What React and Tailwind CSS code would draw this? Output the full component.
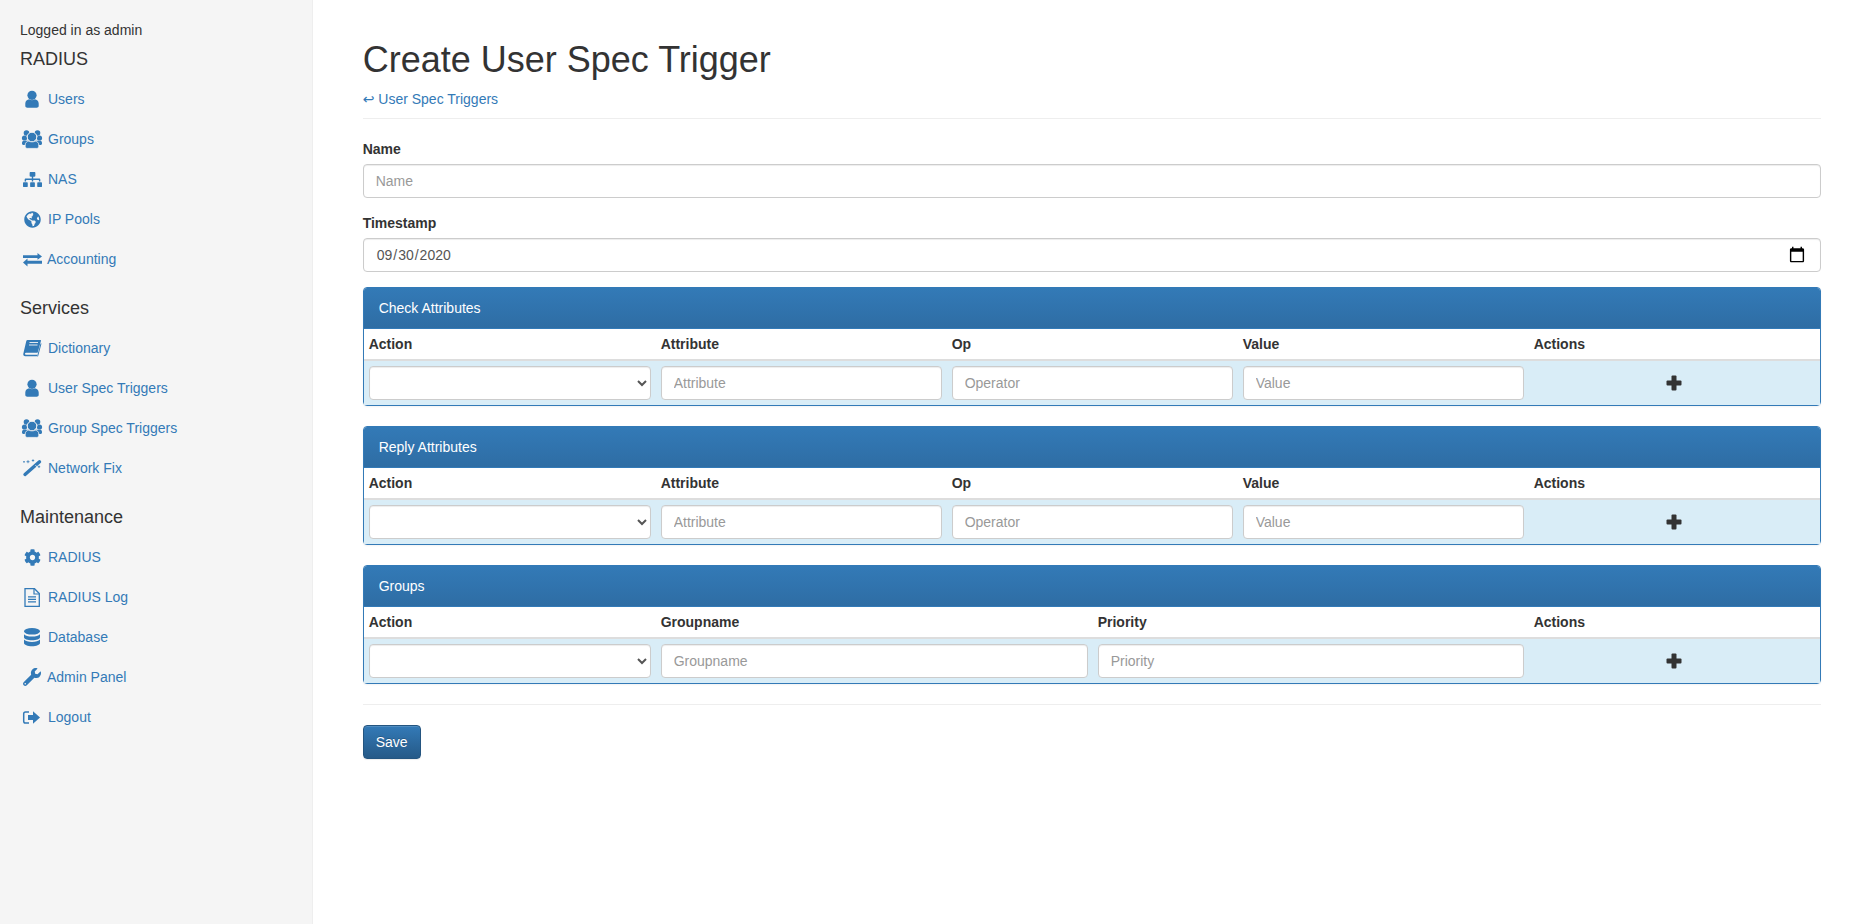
import { FaCog, FaGlobeAmericas, FaSitemap, FaWrench } from "react-icons/fa";

const Box = ({ children }) => (
  <svg className="h-[20px] w-[28px] shrink-0" viewBox="0 0 28 20" fill="#337ab7">{children}</svg>
);

const UserIcon = () => (
  <Box>
    <circle cx="12" cy="6.300" r="4.600" />
    <path d="M5.300 14.500c0-2.600 2-3.600 3.800-4.200 1.600 1.100 4.200 1.100 5.800 0 1.800.6 3.800 1.600 3.800 4.200v2.600c0 1-1 1.600-2 1.600H7.300c-1 0-2-.6-2-1.600z" />
  </Box>
);

const GroupIcon = () => (
  <Box>
    <circle cx="6.500" cy="4" r="2.800" />
    <circle cx="17.500" cy="4" r="2.800" />
    <circle cx="4.500" cy="9" r="2.600" />
    <circle cx="19.500" cy="9" r="2.600" />
    <path d="M2 13.500c0-1.500 1.500-1.800 3-1.800h14c1.500 0 3 .3 3 1.800v1c0 1-1 1.500-2 1.500H4c-1 0-2-.5-2-1.500z" />
    <circle cx="12" cy="8" r="4.800" stroke="#f5f5f5" strokeWidth="1" />
    <path d="M5.200 16c0-2.600 1.800-3.400 3.600-3.900 1.600 1 4.800 1 6.400 0 1.800.5 3.600 1.300 3.600 3.900v1.500c0 1-1 1.900-2 1.900H7.200c-1 0-2-.9-2-1.900z" stroke="#f5f5f5" strokeWidth=".8" />
  </Box>
);

const TransferIcon = () => (
  <svg className="h-[20px] w-[27px] shrink-0" viewBox="0 0 27 20" fill="#337ab7">
    <path d="M3 6.200h14.500V4l4.500 3.600-4.500 3.200V9H3z" />
    <path d="M22 11.700H7.500V9.500L3 13.400l4.500 4.100v-2.700H22z" />
  </svg>
);

const BookIcon = () => (
  <Box>
    <path d="M7.500 2h13c.4 0 .6.300.5.700l-3.200 11.500c-.1.400-.4.600-.8.600H6.500c-1 0-1.500.4-1.500 1s.5 1 1.500 1h10.800l-.4 1.500H5.500C3.800 18.400 3 17.300 3.300 15.800L6.300 3c.2-.7.600-1 1.200-1z" />
    <path d="M9.500 4.500h8.500M9 7h8.500" stroke="#f5f5f5" strokeWidth=".9" />
    <path d="M21 5.500l-3.400 12.900" stroke="#337ab7" strokeWidth="1" />
  </Box>
);

const WandIcon = () => (
  <Box>
    <path d="M5 16.500L19.500 3.800" stroke="#337ab7" strokeWidth="3.400" strokeLinecap="round" />
    <path d="M15.500 7.200l1.500 1.700" stroke="#f5f5f5" strokeWidth=".9" />
    <path d="M8 2.200v3M6.500 3.700h3M13 1.300v2.400M11.800 2.500h2.400M19 7.500v2.400M17.800 8.700h2.400M4 3v1.600M3.200 3.800h1.600" stroke="#337ab7" strokeWidth=".8" />
  </Box>
);

const DatabaseIcon = () => (
  <Box>
    <ellipse cx="12" cy="4.300" rx="8" ry="3.300" />
    <path d="M4 7.200c1.200 1.600 4.400 2.400 8 2.400s6.800-.8 8-2.400v3c0 1.800-3.600 3-8 3s-8-1.200-8-3z" />
    <path d="M4 12.600c1.200 1.600 4.400 2.400 8 2.400s6.800-.8 8-2.400v3.400c0 1.800-3.600 3.200-8 3.200s-8-1.400-8-3.200z" />
  </Box>
);

const FileIcon = () => (
  <Box>
    <path d="M5 1.700h9.500L19.300 6.500V19.300H5z" fill="none" stroke="#337ab7" strokeWidth="1.300" />
    <path d="M14 1.700V7h5.300" fill="none" stroke="#337ab7" strokeWidth="1.200" />
    <path d="M8 9.800h8M8 12.300h8M8 14.800h8" stroke="#337ab7" strokeWidth="1.200" />
  </Box>
);

const LogoutIcon = () => (
  <Box>
    <path d="M9 5H5.500C4.300 5 3.700 5.700 3.700 6.800v7.400c0 1.100.6 1.800 1.800 1.800H9" fill="none" stroke="#337ab7" strokeWidth="1.500" />
    <path d="M8 8h5V4.300l7 6.200-7 6.200V13H8z" />
  </Box>
);

const Lib = ({ Icon, size, left, width = "w-[28px]" }) => (
  <span className={`flex h-[20px] ${width} shrink-0 items-center`}>
    <Icon size={size} color="#337ab7" style={{ marginLeft: left }} />
  </span>
);

const navGroups = [
  {
    title: "RADIUS",
    first: true,
    items: [
      { label: "Users", icon: <UserIcon /> },
      { label: "Groups", icon: <GroupIcon /> },
      { label: "NAS", icon: <Lib Icon={FaSitemap} size={19} left={3} /> },
      { label: "IP Pools", icon: <Lib Icon={FaGlobeAmericas} size={17} left={3.500} /> },
      { label: "Accounting", icon: <TransferIcon /> },
    ],
  },
  {
    title: "Services",
    items: [
      { label: "Dictionary", icon: <BookIcon /> },
      { label: "User Spec Triggers", icon: <UserIcon /> },
      { label: "Group Spec Triggers", icon: <GroupIcon /> },
      { label: "Network Fix", icon: <WandIcon /> },
    ],
  },
  {
    title: "Maintenance",
    items: [
      { label: "RADIUS", icon: <Lib Icon={FaCog} size={17} left={3.500} /> },
      { label: "RADIUS Log", icon: <FileIcon /> },
      { label: "Database", icon: <DatabaseIcon /> },
      { label: "Admin Panel", icon: <Lib Icon={FaWrench} size={18} left={3} width="w-[27px]" /> },
      { label: "Logout", icon: <LogoutIcon /> },
    ],
  },
];

const inputClass =
  "block h-[34px] w-full rounded border border-[#ccc] bg-white px-3 py-1.5 text-[14px] leading-[20px] text-[#555] shadow-[inset_0_1px_1px_rgba(0,0,0,0.075)] placeholder:text-[#999]";

const PlusIcon = () => (
  <svg className="mx-auto block h-[16px] w-[16px]" viewBox="0 0 16 16" fill="#333">
    <rect x="5.500" y="0.500" width="5" height="15" rx="1" />
    <rect x="0.500" y="5.500" width="15" height="5" rx="1" />
  </svg>
);

function Panel({ title, columns }) {
  return (
    <div className="mb-5 rounded border border-[#337ab7] bg-white shadow-[0_1px_2px_rgba(0,0,0,0.05)]">
      <div className="h-[41px] rounded-t-[3px] border-b border-[#337ab7] bg-gradient-to-b from-[#337ab7] to-[#2e6da4] px-[15px] py-[10px] text-white">
        {title}
      </div>
      <table className="w-full table-fixed border-collapse">
        <thead>
          <tr>
            <th className="w-[292px] border-b-2 border-[#ddd] p-[5px] text-left font-bold">Action</th>
            {columns.map((c) => (
              <th key={c.label} className={`${c.width} border-b-2 border-[#ddd] p-[5px] text-left font-bold`}>
                {c.label}
              </th>
            ))}
            <th className="border-b-2 border-[#ddd] p-[5px] text-left font-bold">Actions</th>
          </tr>
        </thead>
        <tbody>
          <tr className="bg-[#d9edf7]">
            <td className="p-[5px]">
              <select className={inputClass}>
                <option></option>
              </select>
            </td>
            {columns.map((c) => (
              <td key={c.label} className="p-[5px]">
                <input className={inputClass} placeholder={c.placeholder} />
              </td>
            ))}
            <td className="p-[5px]">
              <PlusIcon />
            </td>
          </tr>
        </tbody>
      </table>
    </div>
  );
}

const attributeColumns = [
  { label: "Attribute", placeholder: "Attribute", width: "w-[291px]" },
  { label: "Op", placeholder: "Operator", width: "w-[291px]" },
  { label: "Value", placeholder: "Value", width: "w-[291px]" },
];

const groupColumns = [
  { label: "Groupname", placeholder: "Groupname", width: "w-[437px]" },
  { label: "Priority", placeholder: "Priority", width: "w-[436px]" },
];

export default function App() {
  return (
    <div className="flex min-h-screen bg-white font-['Liberation_Sans','DejaVu_Sans',sans-serif] text-[14px] leading-[20px] text-[#333]">
      <aside className="w-[312.670px] shrink-0 border-r border-[#eee] bg-[#f5f5f5] pt-5">
        <div className="pl-5">Logged in as admin</div>
        {navGroups.map((group) => (
          <div key={group.title}>
            <h4 className={`${group.first ? "mt-[9px] mb-[10px]" : "mt-[19px] mb-[10px]"} pl-5 text-[18px] leading-[20px]`}>
              {group.title}
            </h4>
            <ul>
              {group.items.map((item) => (
                <li key={item.label}>
                  <a className="flex h-[40px] items-center pl-5 text-[#337ab7]" href="#">
                    {item.icon}
                    {item.label}
                  </a>
                </li>
              ))}
            </ul>
          </div>
        ))}
      </aside>
      <main className="min-w-0 flex-1 pt-5 pr-[55.330px] pl-[50px]">
        <div className="mt-5 mb-5 border-b border-[#eee] pb-[9.500px]">
          <h1 className="mb-[9px] text-[36px] leading-[39.600px]">Create User Spec Trigger</h1>
          <a className="text-[#337ab7]" href="#">↩ User Spec Triggers</a>
        </div>
        <div className="mb-[15px]">
          <label className="mb-[5px] inline-block font-bold">Name</label>
          <input className={inputClass} placeholder="Name" />
        </div>
        <div className="mb-[15px]">
          <label className="mb-[5px] inline-block font-bold">Timestamp</label>
          <input
            className={`${inputClass} [&::-webkit-calendar-picker-indicator]:mr-[2px] [&::-webkit-calendar-picker-indicator]:h-[18px] [&::-webkit-calendar-picker-indicator]:w-[18px] [&::-webkit-calendar-picker-indicator]:p-0`}
            type="date"
            defaultValue="2020-09-30"
          />
        </div>
        <Panel title="Check Attributes" columns={attributeColumns} />
        <Panel title="Reply Attributes" columns={attributeColumns} />
        <Panel title="Groups" columns={groupColumns} />
        <hr className="my-5 border-t border-[#eee]" />
        <button className="h-[34px] rounded border border-[#245580] bg-gradient-to-b from-[#337ab7] to-[#265a88] px-3 text-white shadow-[inset_0_1px_0_rgba(255,255,255,0.15),0_1px_1px_rgba(0,0,0,0.075)] [text-shadow:0_-1px_0_rgba(0,0,0,0.2)]">
          Save
        </button>
      </main>
    </div>
  );
}
